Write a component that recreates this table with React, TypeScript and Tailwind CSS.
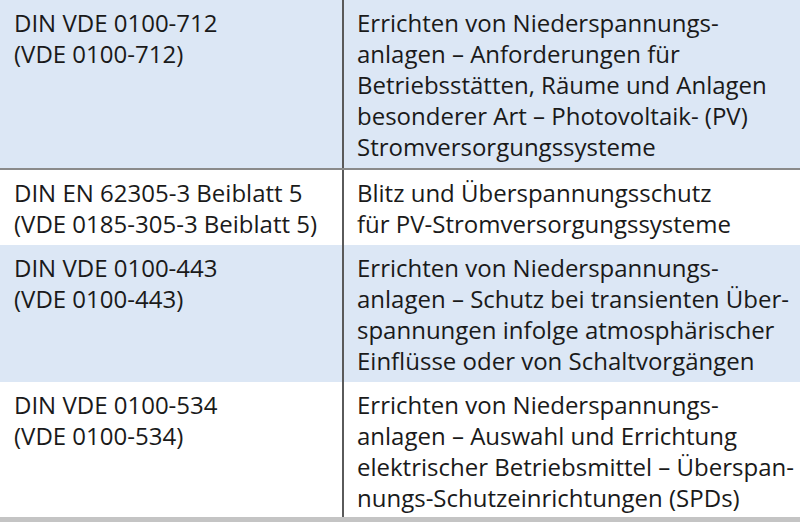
import React from "react";

const rows: { left: string[]; right: string[]; blue: boolean; cls: string }[] = [
  {
    left: ["DIN VDE 0100-712", "(VDE 0100-712)"],
    right: [
      "Errichten von Niederspannungs-",
      "anlagen – Anforderungen für",
      "Betriebsstätten, Räume und Anlagen",
      "besonderer Art – Photovoltaik- (PV)",
      "Stromversorgungssysteme",
    ],
    blue: true,
    cls: "h-[170px] border-b-2 border-[#8a8a8a]",
  },
  {
    left: ["DIN EN 62305-3 Beiblatt 5", "(VDE 0185-305-3 Beiblatt 5)"],
    right: ["Blitz und Überspannungsschutz", "für PV-Stromversorgungssysteme"],
    blue: false,
    cls: "h-[75px]",
  },
  {
    left: ["DIN VDE 0100-443", "(VDE 0100-443)"],
    right: [
      "Errichten von Niederspannungs-",
      "anlagen – Schutz bei transienten Über-",
      "spannungen infolge atmosphärischer",
      "Einflüsse oder von Schaltvorgängen",
    ],
    blue: true,
    cls: "h-[137px]",
  },
  {
    left: ["DIN VDE 0100-534", "(VDE 0100-534)"],
    right: [
      "Errichten von Niederspannungs-",
      "anlagen – Auswahl und Errichtung",
      "elektrischer Betriebsmittel – Überspan-",
      "nungs-Schutzeinrichtungen (SPDs)",
    ],
    blue: false,
    cls: "h-[135px]",
  },
];

export default function App() {
  return (
    <div className="w-[800px] h-[522px] bg-white overflow-hidden text-[#1a1a1a] text-[24px] leading-[31px] font-['Open_Sans',sans-serif]">
      {rows.map((r, i) => (
        <div
          key={i}
          className={`flex ${r.cls} ${r.blue ? "bg-[#dce7f5]" : "bg-white"}`}
        >
          <div className="w-[344px] shrink-0 pl-[14px] pt-[7px] border-r-2 border-[#5a5a5a]">
            {r.left.map((t, j) => (
              <div key={j} className="whitespace-nowrap">{t}</div>
            ))}
          </div>
          <div className="flex-1 pl-[13px] pt-[7px]">
            {r.right.map((t, j) => (
              <div key={j} className="whitespace-nowrap">{t}</div>
            ))}
          </div>
        </div>
      ))}
      <div className="h-[5px] bg-[#c4c4c4]" />
    </div>
  );
}
